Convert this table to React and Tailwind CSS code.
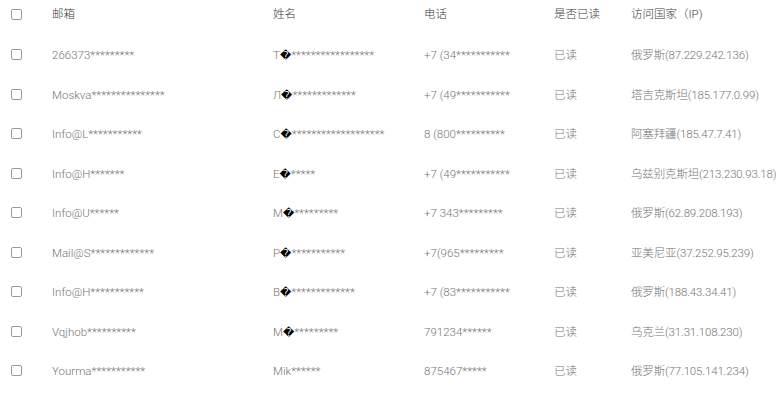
import React from "react";

const rows = [
  ["266373*********", "T\uFFFD*****************", "+7 (34***********", "已读", "俄罗斯(87.229.242.136)"],
  ["Moskva***************", "Л\uFFFD*************", "+7 (49***********", "已读", "塔吉克斯坦(185.177.0.99)"],
  ["Info@L***********", "С\uFFFD*******************", "8 (800**********", "已读", "阿塞拜疆(185.47.7.41)"],
  ["Info@H*******", "Е\uFFFD*****", "+7 (49***********", "已读", "乌兹别克斯坦(213.230.93.18)"],
  ["Info@U******", "М\uFFFD*********", "+7 343*********", "已读", "俄罗斯(62.89.208.193)"],
  ["Mail@S*************", "Р\uFFFD***********", "+7(965*********", "已读", "亚美尼亚(37.252.95.239)"],
  ["Info@H***********", "В\uFFFD*************", "+7 (83***********", "已读", "俄罗斯(188.43.34.41)"],
  ["Vqjhob**********", "М\uFFFD*********", "791234******", "已读", "乌克兰(31.31.108.230)"],
  ["Yourma***********", "Mik******", "875467*****", "已读", "俄罗斯(77.105.141.234)"],
];

function Txt({ s }) {
  const i = s.indexOf("\uFFFD");
  if (i < 0) return <>{s}</>;
  return (
    <>
      {s.slice(0, i)}
      <span className="font-['DejaVu_Sans'] font-normal text-black text-[11px]">{"\uFFFD"}</span>
      {s.slice(i + 1)}
    </>
  );
}

function Box() {
  return <span className="block w-[11px] h-[11px] border border-[#9a9a9a] rounded-[2px] bg-white" />;
}

const grid = "grid grid-cols-[52px_221px_151px_130px_77px_1fr] items-center";

export default function App() {
  return (
    <div className="w-[778px] h-[400px] bg-white overflow-hidden font-['Roboto','Noto_Sans_CJK_SC',sans-serif] font-light text-[11.5px]">
      <div className={`${grid} h-[36px] pb-[7px] text-[#3a3a3a]`}>
        <div className="pl-[11px]"><Box /></div>
        <div>邮箱</div>
        <div>姓名</div>
        <div>电话</div>
        <div>是否已读</div>
        <div>访问国家（IP)</div>
      </div>
      {rows.map((r, idx) => (
        <div key={idx} className={`${grid} h-[39.5px] text-[#757575]`}>
          <div className="pl-[11px] pb-[2px]"><Box /></div>
          <div className="whitespace-nowrap"><Txt s={r[0]} /></div>
          <div className="whitespace-nowrap"><Txt s={r[1]} /></div>
          <div className="whitespace-nowrap">{r[2]}</div>
          <div className="whitespace-nowrap">{r[3]}</div>
          <div className="whitespace-nowrap tracking-[-0.15px]">{r[4]}</div>
        </div>
      ))}
    </div>
  );
}
